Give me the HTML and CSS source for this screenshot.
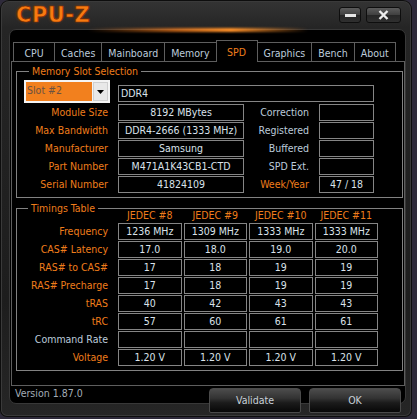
FILE: index.html
```html
<!DOCTYPE html>
<html>
<head>
<meta charset="utf-8">
<title>CPU-Z</title>
<link rel="stylesheet" href="styles.css">
</head>
<body>
<div class="window">
  <div class="titlebar">
    <div class="logo">CPU-Z</div>
    <div class="wbtns">
      <div class="wbtn min"><span class="dash"></span></div>
      <div class="wbtn close">
        <svg width="11" height="10" viewBox="0 0 11 10"><path d="M1.5 1L9.5 9M9.5 1L1.5 9" stroke="#ececec" stroke-width="2.4" fill="none"/></svg>
      </div>
    </div>
  </div>
  <div class="panel">
    <div class="tabs">
      <div class="tab">CPU</div>
      <div class="tab">Caches</div>
      <div class="tab">Mainboard</div>
      <div class="tab">Memory</div>
      <div class="tab active">SPD</div>
      <div class="tab">Graphics</div>
      <div class="tab">Bench</div>
      <div class="tab">About</div>
    </div>
    <div class="page">
      <div class="group slot">
        <span class="legend">Memory Slot Selection</span>
        <div class="slot-grid">
          <div class="dropdown">
            <span class="dd-val">Slot #2</span>
            <span class="dd-btn"><svg width="7" height="4" viewBox="0 0 7 4"><path d="M0 0H7L3.5 4Z" fill="#000"/></svg></span>
          </div>
          <div class="box wide">DDR4</div>

          <div class="lbl">Module Size</div>
          <div class="box">8192 MBytes</div>
          <div class="lbl alt">Correction</div>
          <div class="box"></div>

          <div class="lbl">Max Bandwidth</div>
          <div class="box">DDR4-2666 (1333 MHz)</div>
          <div class="lbl alt">Registered</div>
          <div class="box"></div>

          <div class="lbl">Manufacturer</div>
          <div class="box">Samsung</div>
          <div class="lbl alt">Buffered</div>
          <div class="box"></div>

          <div class="lbl">Part Number</div>
          <div class="box">M471A1K43CB1-CTD</div>
          <div class="lbl alt">SPD Ext.</div>
          <div class="box"></div>

          <div class="lbl">Serial Number</div>
          <div class="box">41824109</div>
          <div class="lbl">Week/Year</div>
          <div class="box">47 / 18</div>
        </div>
      </div>

      <div class="group timings">
        <span class="legend">Timings Table</span>
        <div class="t-grid">
          <div></div>
          <div class="hd">JEDEC #8</div>
          <div class="hd">JEDEC #9</div>
          <div class="hd">JEDEC #10</div>
          <div class="hd">JEDEC #11</div>

          <div class="lbl">Frequency</div>
          <div class="box">1236 MHz</div><div class="box">1309 MHz</div><div class="box">1333 MHz</div><div class="box">1333 MHz</div>

          <div class="lbl">CAS# Latency</div>
          <div class="box">17.0</div><div class="box">18.0</div><div class="box">19.0</div><div class="box">20.0</div>

          <div class="lbl">RAS# to CAS#</div>
          <div class="box">17</div><div class="box">18</div><div class="box">19</div><div class="box">19</div>

          <div class="lbl">RAS# Precharge</div>
          <div class="box">17</div><div class="box">18</div><div class="box">19</div><div class="box">19</div>

          <div class="lbl">tRAS</div>
          <div class="box">40</div><div class="box">42</div><div class="box">43</div><div class="box">43</div>

          <div class="lbl">tRC</div>
          <div class="box">57</div><div class="box">60</div><div class="box">61</div><div class="box">61</div>

          <div class="lbl alt">Command Rate</div>
          <div class="box"></div><div class="box"></div><div class="box"></div><div class="box"></div>

          <div class="lbl">Voltage</div>
          <div class="box">1.20 V</div><div class="box">1.20 V</div><div class="box">1.20 V</div><div class="box">1.20 V</div>
        </div>
      </div>
    </div>
    <div class="footer">
      <div class="version">Version 1.87.0</div>
      <div class="actions">
        <div class="btn">Validate</div>
        <div class="btn">OK</div>
      </div>
    </div>
  </div>
</div>
</body>
</html>
```

FILE: styles.css
```css
* { box-sizing: border-box; }
html, body { margin: 0; padding: 0; }
body {
  width: 417px;
  height: 419px;
  overflow: hidden;
  background: #2e2a3a;
  font-family: "DejaVu Sans Condensed", "DejaVu Sans", sans-serif;
  font-stretch: condensed;
  font-size: 10.5px;
}

.window {
  width: 412px;
  height: 417px;
  border-radius: 9px 9px 7px 7px;
  background: linear-gradient(#343434 0, #252525 28px, #1d1d1d 300px, #262626 100%);
  box-shadow: inset 0 0 0 1px #0d0d0d, inset 0 0 0 2px #3a3a3a;
}

.titlebar {
  height: 29px;
  display: flex;
  align-items: flex-start;
  padding: 0 11px 0 16px;
}
.logo {
  margin-top: 5px;
  font: bold 21px/21px "DejaVu Sans", sans-serif;
  letter-spacing: 0.5px;
  color: #f87a10;
  -webkit-text-stroke: 0.7px #7a2800;
  text-shadow: 0 0 3px rgba(255, 110, 0, 0.35);
}
.wbtns {
  margin-left: auto;
  margin-top: 7px;
  display: flex;
  gap: 5px;
}
.wbtn {
  height: 16px;
  border-radius: 3px;
  border: 1px solid #0e0e0e;
  background: linear-gradient(#5c5c5c, #404040 48%, #262626 52%, #303030);
  display: flex;
  align-items: center;
  justify-content: center;
}
.min { width: 22px; }
.close { width: 35px; }
.dash { width: 11px; height: 3px; background: #e6e6e6; }

.panel {
  position: relative;
  margin-left: 9px;
  width: 397px;
  height: 375px;
  border: 1px solid #383838;
  border-radius: 7px;
  background: #000;
}
.panel::before {
  content: "";
  position: absolute;
  top: -2px;
  left: 78px;
  width: 220px;
  height: 4px;
  background: linear-gradient(90deg, rgba(255, 120, 20, 0), rgba(255, 130, 30, 0.7) 40%, rgba(255, 145, 40, 1) 65%, rgba(255, 120, 20, 0));
  filter: blur(0.8px);
}

.tabs {
  position: relative;
  z-index: 1;
  display: flex;
  align-items: flex-end;
  height: 21px;
  margin: 10px 0 0 3px;
}
.tab {
  height: 19px;
  min-width: 42px;
  padding: 2px 6px 0;
  margin-right: -1px;
  border: 1px solid #5e5e5e;
  border-bottom: 0;
  background: #000;
  color: #bccbdb;
  text-align: center;
  line-height: 16px;
  white-space: nowrap;
}
.tab.active {
  height: 22px;
  margin-bottom: -1px;
  line-height: 18px;
  color: #f07e1c;
}

.page {
  margin-left: 1px;
  width: 394px;
  height: 325px;
  border: 1px solid #5e5e5e;
  padding: 9px 0 0 4px;
}

.group {
  position: relative;
  width: 387px;
  border: 1px solid #828282;
}
.slot { height: 127px; padding-top: 8px; }
.timings { height: 163px; margin-top: 10px; }
.legend {
  position: absolute;
  top: -8px;
  left: 12px;
  padding: 0 3px;
  background: #000;
  color: #ef7d1b;
  line-height: 14px;
  white-space: nowrap;
}
.timings .legend { left: 11px; }

.slot-grid {
  display: grid;
  grid-template-columns: 101px 126px 75px 55px;
  grid-template-rows: 23px repeat(5, 17px);
  row-gap: 1px;
}
.dropdown {
  margin-left: 7px;
  width: 86px;
  height: 23px;
  padding: 2px;
  background: #f4f4f4;
  display: flex;
  gap: 1px;
}
.dd-val {
  flex: 1;
  background: #f2801e;
  color: #6a5242;
  padding-left: 1px;
  line-height: 16px;
}
.dd-btn {
  width: 15px;
  background: #e8e8e8;
  border: 1px solid #cfcfcf;
  display: flex;
  align-items: center;
  justify-content: center;
}

.box {
  height: 17px;
  border: 1px solid #858585;
  color: #dae2ea;
  text-align: center;
  line-height: 15px;
  white-space: nowrap;
  overflow: hidden;
}
.box.wide {
  grid-column: 2 / 5;
  margin-top: 5px;
  text-align: left;
  padding-left: 2px;
}

.lbl {
  color: #ef7d1b;
  text-align: right;
  padding-right: 10px;
  line-height: 17px;
  white-space: nowrap;
}
.lbl.alt { color: #bccbdb; }

.t-grid {
  display: grid;
  grid-template-columns: 99px repeat(4, 63.5px);
  grid-template-rows: 13px repeat(8, 17px);
  column-gap: 2px;
  row-gap: 1px;
}
.t-grid .lbl { padding-right: 8px; }
.hd {
  color: #ef7d1b;
  text-align: center;
  line-height: 13px;
  white-space: nowrap;
}

.footer {
  display: flex;
  margin-top: 2px;
  height: 25px;
}
.version {
  margin-left: 5px;
  color: #a3adb7;
  line-height: 11px;
}
.actions {
  margin-left: auto;
  margin-right: 4px;
  display: flex;
  gap: 8px;
}
.btn {
  width: 92px;
  height: 25px;
  border: 1px solid #4a4a4a;
  border-radius: 4px 4px 2px 2px;
  background: linear-gradient(#4c4c4c, #333 40%, #1b1b1b 60%, #070707);
  color: #c8d0d8;
  text-align: center;
  line-height: 23px;
}
```
